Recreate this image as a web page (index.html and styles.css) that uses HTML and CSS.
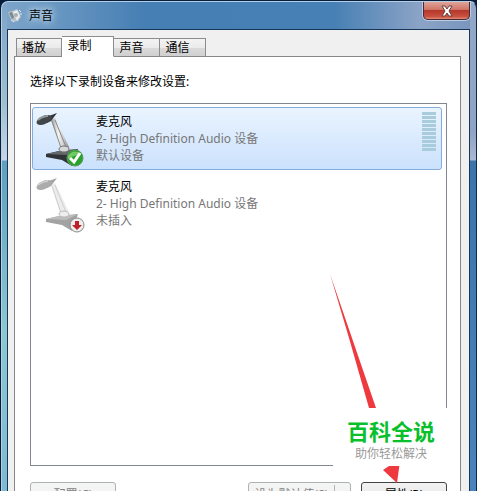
FILE: index.html
```html
<!DOCTYPE html>
<html lang="zh-CN">
<head>
    <meta charset="UTF-8">
    <meta name="viewport" content="width=device-width, initial-scale=1.0">
    <title>声音</title>
    <link rel="stylesheet" href="styles.css">
</head>
<body>
    <div class="window">
        <!-- Title bar -->
        <header class="titlebar">
            <svg class="title-icon" viewBox="0 0 16 16" aria-hidden="true">
                <path d="M1 4l4-1 5-2 2 3 2 5-3 4-4 1-4-4z" fill="#b9c1c8"/>
                <path d="M2 5l3-1 2 6-2 1z" fill="#7d8790"/>
                <path d="M6 4l4-2 3 6-3 5z" fill="#e9edf0"/>
                <circle cx="9" cy="7" r="2" fill="#a5afb6"/>
                <path d="M12 2l2 2M13 6h2M4 12l3 2" stroke="#e4ebf1" fill="none"/>
            </svg>
            <h1>声音</h1>
            <button class="close" type="button" aria-label="关闭">
                <svg viewBox="0 0 14 12" aria-hidden="true">
                    <path d="M2 1h3l2 3 2-3h3L9 6l3 5H9L7 8l-2 3H2l3-5z" fill="#fff" stroke="#69413f"/>
                </svg>
            </button>
        </header>

        <main class="dialog">
            <nav class="tabs">
                <button class="tab" type="button">播放</button>
                <button class="tab active" type="button">录制</button>
                <button class="tab" type="button">声音</button>
                <button class="tab" type="button">通信</button>
            </nav>

            <section class="panel">
                <p class="hint">选择以下录制设备来修改设置:</p>

                <ul class="devices">
                    <li class="device selected">
                        <svg class="mic" viewBox="0 0 52 60" aria-hidden="true">
                            <defs>
                                <linearGradient id="arm" x1="0" x2="1">
                                    <stop offset="0" stop-color="#999"/>
                                    <stop offset=".4" stop-color="#f4f4f4"/>
                                    <stop offset=".7" stop-color="#ccc"/>
                                    <stop offset="1" stop-color="#888"/>
                                </linearGradient>
                            </defs>
                            <path d="M12 46l13-3 19-2-6 17-10-6-16-3z" fill="#303436"/>
                            <path d="M12 46l13-3 19-2-12 6z" fill="#63686a"/>
                            <path d="M17 12l4-2 14 29c0 4-7 5-9 1z" fill="url(#arm)"/>
                            <path d="M18 13l9 27M21 12l11 27" stroke="#888" fill="none"/>
                            <ellipse cx="30" cy="41" rx="5" ry="3" fill="#d8d8d8" stroke="#777"/>
                            <path d="M12 9l11-4-6 8-4 2z" fill="#33383a"/>
                            <ellipse cx="10" cy="12" rx="8" ry="4" transform="rotate(-24 10 12)" fill="#414648"/>
                            <path d="M4 12q5-4 10-4" stroke="#91989b" stroke-width="2" fill="none"/>
                            <circle cx="41" cy="50" r="8" fill="#28a32b" stroke="#5c9961"/>
                            <path d="M34 48q5-8 14-2-5 0-14 5z" fill="#73ca64"/>
                            <path d="M36 50l4 4 6-9" stroke="#fff" stroke-width="3" fill="none"/>
                        </svg>
                        <div class="info">
                            <h2>麦克风</h2>
                            <p>2- High Definition Audio 设备</p>
                            <p>默认设备</p>
                        </div>
                        <div class="meter" role="img" aria-label="音量"></div>
                    </li>
                    <li class="device">
                        <svg class="mic" viewBox="0 0 52 60" aria-hidden="true">
                            <path d="M12 46l13-3 19-2-6 17-10-6-16-3z" fill="#a3a3a3"/>
                            <path d="M12 46l13-3 19-2-12 6z" fill="#bdbdbd"/>
                            <path d="M17 12l4-2 14 29c0 4-7 5-9 1z" fill="#ececec"/>
                            <path d="M18 13l9 27M21 12l11 27" stroke="#cfcfcf" fill="none"/>
                            <ellipse cx="30" cy="41" rx="5" ry="3" fill="#eee" stroke="#bbb"/>
                            <path d="M12 9l11-4-6 8-4 2z" fill="#a4a4a4"/>
                            <ellipse cx="10" cy="12" rx="8" ry="4" transform="rotate(-24 10 12)" fill="#ababab"/>
                            <path d="M4 12q5-4 10-4" stroke="#ccc" stroke-width="2" fill="none"/>
                            <circle cx="43" cy="52" r="7" fill="#eee" stroke="#8b8b8b"/>
                            <path d="M41 48h4v4h3l-5 5-5-5h3z" fill="#bd2028"/>
                        </svg>
                        <div class="info">
                            <h2>麦克风</h2>
                            <p>2- High Definition Audio 设备</p>
                            <p>未插入</p>
                        </div>
                    </li>
                </ul>

                <div class="actions">
                    <button class="btn" type="button" disabled>配置(C)</button>
                    <button class="btn split" type="button" disabled>设为默认值(S)</button>
                    <button class="btn primary" type="button">属性(P)</button>
                </div>
            </section>
        </main>
    </div>

    <!-- Pointer to the properties button, with the site mark over it -->
    <svg class="arrow" viewBox="0 0 80 212" aria-hidden="true">
        <path d="M4 2L50 136 68 191 74 189 71 211 57 198 63 194 43 136 23 66z" fill="#ee3a3e"/>
    </svg>
    <aside class="mark">
        <strong>百科全说</strong>
        <span>助你轻松解决</span>
    </aside>
</body>
</html>
```
FILE: styles.css
```css
* {
    box-sizing: border-box;
}
body {
    margin: 0;
    height: 100vh;
    position: relative;
    overflow: hidden;
    background: #071d3c;
    font-family: "Noto Sans", "Noto Sans CJK SC", sans-serif;
    font-size: 12px;
    line-height: 17px;
    color: #000;
}
h1, h2, p, ul {
    margin: 0;
    padding: 0;
    font-size: 12px;
    font-weight: normal;
}
button {
    font: inherit;
    color: inherit;
    padding: 0;
}

/* Window frame */
.window {
    display: flex;
    flex-direction: column;
    height: calc(100vh + 36px);
    margin: 1px 0 0 1px;
    padding: 0 6px 0 5px;
    border: 1px solid #b5d0e6;
    border-right-color: #0c2a4d;
    border-radius: 7px 7px 0 0;
    background:
        linear-gradient(#93a7c6, #8fa3c4 130px, #aab9d2 158px, #3a74ab 159px, #4a86bd) right / 6px 100% no-repeat,
        linear-gradient(#7ea5c8, #9fbfcc 100px, #c8d5e6 158px, #5f9fbd 159px, #8cc8d0 330px, #7ab7d0) left / 5px 100% no-repeat,
        linear-gradient(90deg, #7ea5ca, #467fb4 30%, #4780b4 70%, #8ba3c6 88%, #7895bd);
}
.titlebar {
    display: flex;
    align-items: center;
    gap: 6px;
    height: 27px;
    flex: none;
}
.title-icon {
    width: 16px;
    height: 16px;
}
.titlebar h1 {
    flex: 1;
    text-shadow: 0 0 6px #d5e5f3, 0 0 8px #d5e5f3;
}
.close {
    align-self: flex-start;
    width: 47px;
    height: 18px;
    display: flex;
    align-items: center;
    justify-content: center;
    border: 1px solid #4b2a35;
    border-top: 0;
    border-radius: 0 0 5px 5px;
    background: linear-gradient(#dea49b, #cf7566 45%, #b5382c 50%, #c9503f 85%, #e08b74);
    box-shadow: 0 0 0 1px #b9cce0;
}
.close svg {
    width: 14px;
    height: 12px;
}

/* Dialog and tabs */
.dialog {
    flex: 1;
    display: flex;
    flex-direction: column;
    padding: 6px 8px 0 6px;
    border: 1px solid #17365a;
    border-bottom: 0;
    background: #f0f0f0;
}
.tabs {
    display: flex;
    align-items: flex-end;
    padding-left: 2px;
    margin-bottom: -1px;
}
.tab {
    width: 46px;
    height: 19px;
    padding-right: 10px;
    border: 1px solid #8b8c8f;
    background: linear-gradient(#f3f3f3, #ebebeb 50%, #dadada 51%, #d0d0d0);
}
.tab + .tab {
    border-left-width: 0;
}
.tabs .active {
    position: relative;
    width: 52px;
    height: 21px;
    padding: 0 16px 3px 0;
    border-bottom-color: #fff;
    background: #fff;
}
.panel {
    flex: 1;
    display: flex;
    flex-direction: column;
    padding: 16px 13px 20px 15px;
    border: 1px solid #85878b;
    background: #fff;
}
.devices {
    flex: 1;
    margin-top: 13px;
    padding: 3px 4px 3px 1px;
    border: 1px solid #82878f;
    list-style: none;
}
.device {
    display: flex;
    gap: 10px;
    height: 63px;
    margin-bottom: 2px;
    padding: 0 5px 0 1px;
    border: 1px solid transparent;
    border-radius: 3px;
    color: #777;
}
.device.selected {
    border-color: #84acdd;
    background: linear-gradient(#eaf4fe, #cbe1fd);
}
.mic {
    width: 52px;
    height: 60px;
}
.info {
    flex: 1;
    padding-top: 5px;
}
.info h2 {
    color: #000;
}
.meter {
    width: 14px;
    height: 39px;
    margin-top: 4px;
    background: repeating-linear-gradient(#a9ccdc 0 3px, transparent 3px 4px);
}

/* Bottom buttons */
.actions {
    display: flex;
    margin-top: 16px;
}
.btn {
    width: 86px;
    height: 24px;
    border: 1px solid #707070;
    border-radius: 3px;
    background: linear-gradient(#f2f2f2, #ebebeb 50%, #ddd 51%, #cfcfcf);
}
.btn:disabled {
    border-color: #adb2b5;
    background: #f4f4f4;
    color: #838383;
}
.btn.split {
    position: relative;
    width: 103px;
    margin-left: auto;
    padding-right: 16px;
}
.btn.split::after {
    content: "";
    position: absolute;
    top: 2px;
    right: 15px;
    bottom: 2px;
    border-left: 1px solid #adb2b5;
}
.btn.primary {
    margin-left: 10px;
    border-color: #444;
}

/* Overlay */
.arrow {
    position: absolute;
    left: 326px;
    top: 272px;
    width: 80px;
    height: 212px;
}
.mark {
    position: absolute;
    left: 333px;
    top: 408px;
    width: 116px;
    height: 58px;
    padding-top: 9px;
    display: flex;
    flex-direction: column;
    align-items: center;
    background: #fff;
    color: #999;
}
.mark strong {
    font-size: 22px;
    line-height: 28px;
    font-weight: bold;
    color: #0abf2c;
}
```
